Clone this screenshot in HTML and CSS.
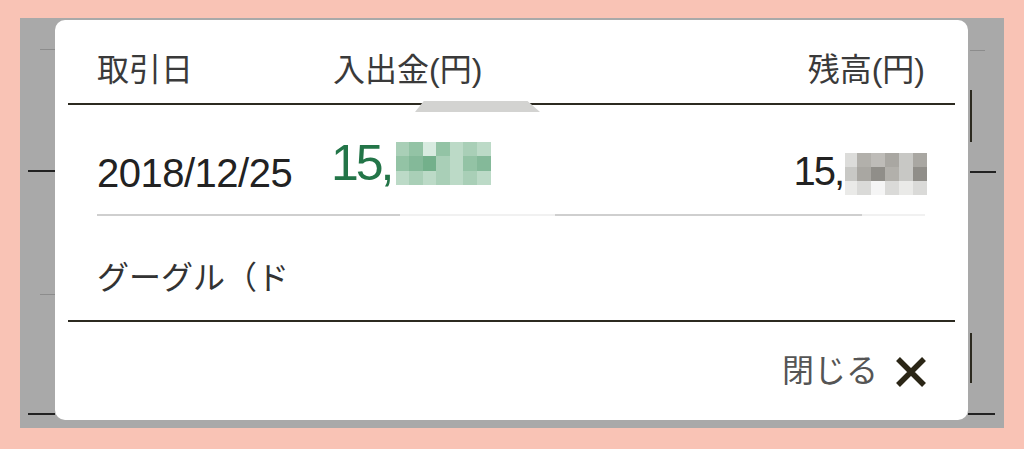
FILE: index.html
```html
<!DOCTYPE html>
<html lang="ja">
  <head>
    <meta charset="UTF-8" />
    <meta name="viewport" content="width=device-width, initial-scale=1.0" />
    <title>取引明細</title>
    <link rel="stylesheet" href="styles.css">
  </head>
  <body>
    <div class="backdrop">
      <div class="modal">
        <div class="smudge"></div>

        <div class="head">
          <span>取引日</span>
          <span>入出金(円)</span>
          <span class="right">残高(円)</span>
        </div>

        <div class="row">
          <span class="date">2018/12/25</span>
          <div class="amount plus">
            <span>15,</span>
            <div class="mosaic green">
              <i class="gc"></i><i class="gd"></i><i class="ga"></i><i class="gd"></i><i class="gb"></i><i class="gc"></i><i class="gb"></i>
              <i class="gd"></i><i class="ge"></i><i class="gf"></i><i class="gc"></i><i class="gb"></i><i class="gd"></i><i class="ge"></i>
              <i class="gb"></i><i class="gc"></i><i class="gb"></i><i class="gc"></i><i class="gb"></i><i class="gc"></i><i class="gb"></i>
            </div>
          </div>
          <div class="amount balance">
            <span>15,</span>
            <div class="mosaic gray">
              <i class="k1"></i><i class="k4"></i><i class="k3"></i><i class="k5"></i><i class="k2"></i><i class="k5"></i>
              <i class="k2"></i><i class="k5"></i><i class="k6"></i><i class="k4"></i><i class="k2"></i><i class="k6"></i>
              <i class="k8"></i><i class="k7"></i><i class="k9"></i><i class="k7"></i><i class="k8"></i><i class="k7"></i>
            </div>
          </div>
        </div>
        <div class="sep"></div>

        <div class="desc">グーグル（ド</div>

        <div class="foot">
          <span>閉じる</span>
          <svg class="close" width="34" height="32" viewBox="0 0 34 32">
            <path d="M4 3 L30 29 M30 3 L4 29" stroke="#2b2616" stroke-width="5.5" fill="none" />
          </svg>
        </div>
      </div>
    </div>
  </body>
</html>
```

FILE: styles.css
```css
body {
  margin: 0;
  width: 1024px;
  height: 449px;
  background-color: #f9c3b5;
  font-family: "Liberation Sans", "Noto Sans CJK JP", sans-serif;
  color: #333;
  overflow: hidden;
}
.backdrop {
  margin: 18px 0 0 20px;
  width: 984px;
  height: 410px;
  box-sizing: border-box;
  padding: 2px 36px 8px 35px;
  background-color: #a9a9a9;
  /* table rules of the page behind the dialog */
  background-image:
    linear-gradient(#222, #222),
    linear-gradient(#222, #222),
    linear-gradient(#8c8c8c, #8c8c8c),
    linear-gradient(#8c8c8c, #8c8c8c),
    linear-gradient(#2c2a20, #2c2a20),
    linear-gradient(#222, #222),
    linear-gradient(#2c2a20, #2c2a20),
    linear-gradient(#222, #222),
    linear-gradient(#8c8c8c, #8c8c8c);
  background-repeat: no-repeat;
  background-size:
    27px 2px, 27px 2px, 15px 1px, 15px 1px,
    2px 52px, 26px 2px, 2px 50px, 27px 2px, 15px 1px;
  background-position:
    8px 152px, 8px 395px, 20px 31px, 20px 276px,
    950px 72px, 950px 153px, 950px 315px, 948px 395px, 950px 32px;
}
.modal {
  position: relative;
  background-color: #fff;
  border-radius: 10px;
  padding: 0 13px;
}
.smudge {
  position: absolute;
  left: 360px;
  top: 81px;
  width: 125px;
  height: 11px;
  background-color: #d3d3d1;
  clip-path: polygon(7% 0, 90% 0, 100% 100%, 0 100%);
}
.head,
.row,
.desc {
  display: grid;
  grid-template-columns: 236px 1fr auto;
  padding: 0 30px 0 29px;
}
.head {
  padding-top: 31px;
  padding-bottom: 14px;
  border-bottom: 2px solid #2c2a20;
  font-size: 32px;
  line-height: 38px;
  color: #3a3a3a;
}
.right {
  text-align: right;
}
.row {
  height: 109px;
  align-items: start;
  color: #222;
}
.date {
  margin-top: 48px;
  font-size: 40px;
  line-height: 40px;
  letter-spacing: -0.5px;
}
.amount {
  display: flex;
  align-items: flex-start;
}
.plus {
  margin-top: 33px;
  margin-left: -2px;
  font-size: 50px;
  line-height: 50px;
  letter-spacing: -3px;
  color: #237548;
}
.balance {
  margin-top: 46px;
  margin-right: -2px;
  font-size: 40px;
  line-height: 40px;
  letter-spacing: -2px;
}
.mosaic {
  display: grid;
}
.mosaic i {
  display: block;
}
.green {
  margin: 4px 0 0 4px;
  width: 95px;
  height: 43px;
  grid-template-columns: repeat(7, 1fr);
}
.gray {
  margin: 2px 0 0 2px;
  width: 82px;
  height: 42px;
  grid-template-columns: 12px repeat(5, 1fr);
}
.ga { background: #d8ebe0; }
.gb { background: #bcdac7; }
.gc { background: #a9cfb7; }
.gd { background: #93c3a5; }
.ge { background: #84b999; }
.gf { background: #73b08b; }
.k1 { background: #dcdcda; }
.k2 { background: #c8c8c5; }
.k3 { background: #bebcb8; }
.k4 { background: #b2b0ab; }
.k5 { background: #a9a7a2; }
.k6 { background: #908e89; }
.k7 { background: #dadad8; }
.k8 { background: #eaeae8; }
.k9 { background: #f5f5f5; }
.sep {
  height: 2px;
  margin: 0 30px 0 29px;
  background: linear-gradient(to right,
    #cfcfcf 0 303px, #f1f1f1 303px 458px,
    #cfcfcf 458px 765px, #f1f1f1 765px);
}
.desc {
  display: block;
  padding-top: 43px;
  padding-bottom: 23px;
  border-bottom: 2px solid #2c2a20;
  font-size: 32px;
  line-height: 38px;
  color: #333;
}
.foot {
  display: flex;
  justify-content: flex-end;
  align-items: center;
  gap: 16px;
  padding: 30px 27px 30px 0;
  font-size: 32px;
  line-height: 38px;
  color: #555;
}
.close {
  display: block;
  margin-top: 2px;
}
```
